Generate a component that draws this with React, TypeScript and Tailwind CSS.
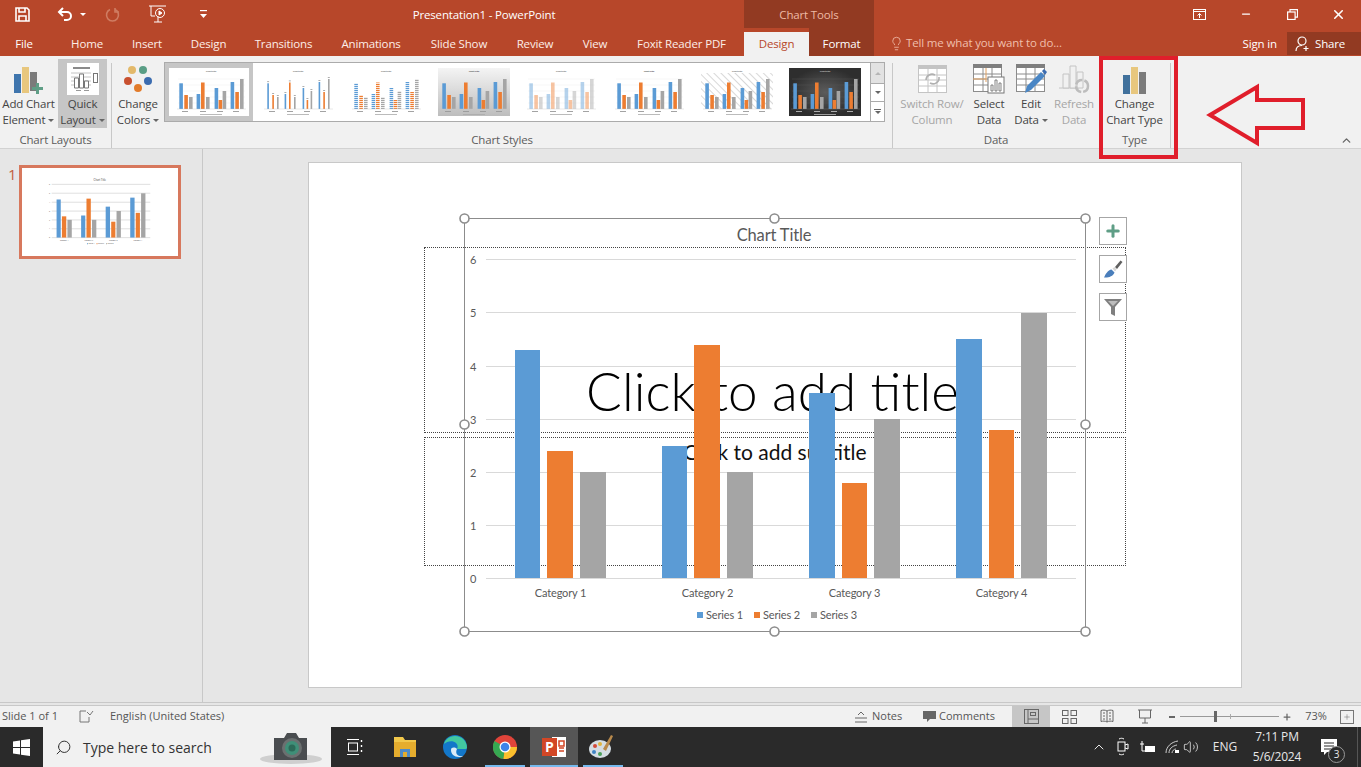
import { ChevronUp, Lightbulb, Minus, Plus, Search, Volume2, X } from "lucide-react";

const BLUE = "#5b9bd5";
const ORANGE = "#ed7d31";
const GRAY = "#a5a5a5";

const series = [
  { name: "Category 1", bars: [[515, 540, 350], [547, 573, 451], [580, 606, 472]] },
  { name: "Category 2", bars: [[662, 687, 446], [694, 720, 345], [727, 753, 472]] },
  { name: "Category 3", bars: [[809, 835, 393], [842, 867, 483], [874, 900, 419]] },
  { name: "Category 4", bars: [[956, 982, 339], [989, 1014, 430], [1021, 1047, 313]] },
];
const colors = [BLUE, ORANGE, GRAY];
const ticks = [[6, 259.5], [5, 312.5], [4, 366.5], [3, 419.5], [2, 472.5], [1, 525.5], [0, 578.5]];
const handles = [[464.5, 218.5], [774.5, 218.5], [1085.5, 218.5], [464.5, 424.5], [1085.5, 424.5], [464.5, 631.5], [774.5, 631.5], [1085.5, 631.5]];

function ChartArt({ mini = false }: { mini?: boolean }) {
  return (
    <g style={{ fontFamily: "Lato, sans-serif" }}>
      <text x="774" y="241" textAnchor="middle" fontSize="16.500" fill="#595959">Chart Title</text>
      {ticks.map(([n, y]) => (
        <g key={n}>
          <line x1="486" x2="1076" y1={y} y2={y} stroke="#d9d9d9" strokeWidth={mini ? 5 : 1} />
          <text x="473" y={y + 4} textAnchor="middle" fontSize="11" fill="#595959">{n}</text>
        </g>
      ))}
      {series.map(cat => (
        <g key={cat.name}>
          {cat.bars.map(([x1, x2, top], i) => (
            <rect key={i} x={x1} y={top} width={x2 - x1} height={578 - top} fill={colors[i]} />
          ))}
          <text x={(cat.bars[0][0] + cat.bars[2][1]) / 2} y="597" textAnchor="middle" fontSize="11" fill="#595959">{cat.name}</text>
        </g>
      ))}
      <rect x="697" y="612" width="6" height="6" fill={BLUE} />
      <text x="706" y="619" fontSize="11" fill="#595959">Series 1</text>
      <rect x="754" y="612" width="6" height="6" fill={ORANGE} />
      <text x="763" y="619" fontSize="11" fill="#595959">Series 2</text>
      <rect x="811" y="612" width="6" height="6" fill={GRAY} />
      <text x="820" y="619" fontSize="11" fill="#595959">Series 3</text>
    </g>
  );
}

// bar heights for the little previews in the styles gallery
const thumbBars = [
  [4.3, 3.6, 15.3], [9.3, 3.6, 27], [14, 3.6, 29],
  [21.6, 3.6, 26], [26, 3.6, 14.5], [31, 3.6, 29],
  [39.6, 3.6, 20], [43.6, 3.6, 32], [47.6, 3.6, 23],
  [55.6, 3.6, 14], [60.3, 3.6, 24], [65, 3.6, 11],
];

type ThumbKind = "plain" | "thin" | "striped" | "shaded" | "pale" | "bold" | "hatched" | "dark";

function StyleThumb({ kind }: { kind: ThumbKind }) {
  const dark = kind === "dark";
  const fill = (i: number) => {
    const c = colors[i % 3];
    if (kind === "striped") return `url(#stripe${i % 3})`;
    return c;
  };
  return (
    <svg width="72" height="48" viewBox="0 0 72 48" className="shrink-0">
      <defs>
        <linearGradient id="shade" x1="0" y1="0" x2="0" y2="1">
          <stop offset="0" stopColor="#f4f4f4" />
          <stop offset="1" stopColor="#bdbdbd" />
        </linearGradient>
        <radialGradient id="darkbg">
          <stop offset="0" stopColor="#5c5c5c" />
          <stop offset="1" stopColor="#2e2e2e" />
        </radialGradient>
        {colors.map((c, i) => (
          <pattern key={c} id={`stripe${i}`} width="2" height="2" patternUnits="userSpaceOnUse">
            <rect width="2" height="1.2" fill={c} />
          </pattern>
        ))}
        <pattern id="hatch" width="5" height="5" patternUnits="userSpaceOnUse" patternTransform="rotate(-45)">
          <rect width="1" height="5" fill="#d8d8d8" />
        </pattern>
      </defs>
      {kind === "shaded" && <rect width="72" height="48" fill="url(#shade)" />}
      {dark && <rect width="72" height="48" fill="url(#darkbg)" />}
      {kind === "hatched" && <rect x="0" y="5" width="72" height="36" fill="url(#hatch)" />}
      <text x="36" y="3.500" textAnchor="middle" fontSize="2.600" fontWeight={kind === "shaded" || kind === "bold" ? 700 : 400} fill={dark ? "#ddd" : "#555"} style={{ fontFamily: "Lato, sans-serif" }}>Chart Title</text>
      {(kind === "plain" || kind === "pale" || kind === "bold" || kind === "dark") && [11, 17, 23, 29, 35].map(y => (
        <line key={y} x1="3" x2="70" y1={y} y2={y} stroke={dark ? "#555" : "#e8e8e8"} strokeWidth="0.4" />
      ))}
      {thumbBars.map(([x, w, top], i) => (
        <rect key={i} x={kind === "thin" ? x + 1 : x} y={top} width={kind === "thin" ? 1.6 : w} height={41 - top} fill={fill(i)} opacity={kind === "pale" ? 0.45 : 1} />
      ))}
      {kind === "thin" && thumbBars.map(([x, , top], i) => (
        <rect key={i} x={x + 0.8} y={top - 2} width="2" height="0.8" fill="#999" />
      ))}
      <line x1="2" x2="71" y1="41" y2="41" stroke={dark ? "#777" : "#c8c8c8"} strokeWidth="0.4" />
      {[10, 28, 45, 61].map(x => (
        <rect key={x} x={x - 3} y="43" width="6" height="0.9" fill={dark ? "#bbb" : "#999"} />
      ))}
      <rect x="25" y="46" width="22" height="0.8" fill={dark ? "#bbb" : "#aaa"} />
    </svg>
  );
}

function RibbonButton({ w, icon, lines, caret, active, disabled }: {
  w: number; icon: React.ReactNode; lines: [string, string]; caret?: boolean; active?: boolean; disabled?: boolean;
}) {
  return (
    <div style={{ width: w }} className={`h-[69px] shrink-0 flex flex-col items-center ${active ? "bg-[#c6c6c6]" : ""} ${disabled ? "text-[#a6a6a6]" : "text-[#444444]"}`}>
      <div className="h-[38px] flex items-center justify-center">{icon}</div>
      <span className="h-4 leading-4 whitespace-nowrap">{lines[0]}</span>
      <span className="h-4 leading-4 whitespace-nowrap flex items-center">
        {lines[1]}
        {caret && <span className="ml-[3px] w-0 h-0 border-x-[3px] border-x-transparent border-t-[3px] border-t-[#666]" />}
      </span>
    </div>
  );
}

function Sep() {
  return <div className="w-px h-[85px] mt-[4px] bg-[#c8c8c8] shrink-0" />;
}

function GroupLabel({ children }: { children: string }) {
  return <div className="mt-1 h-4 leading-4 text-center text-[#5c5c5c] whitespace-nowrap">{children}</div>;
}

function BarsIcon() {
  return (
    <svg width="24" height="27" viewBox="0 0 24 27">
      <rect x="0" y="8" width="7" height="19" fill="#41719c" />
      <rect x="8" y="0" width="7" height="27" fill="#e8c77e" />
      <rect x="16" y="5" width="7" height="22" fill="#7b7b7b" />
    </svg>
  );
}

function TableIcon({ dim, head = "#7f7f7f" }: { dim?: boolean; head?: string }) {
  const line = dim ? "#c4c4c4" : "#8c8c8c";
  return (
    <>
      <rect x="0.5" y="3.500" width="28" height="24" fill="#fff" stroke={line} />
      <rect x="0" y="0" width="29" height="4" fill={dim ? "#c4c4c4" : head} />
      {[10, 19].map(x => <line key={x} x1={x} x2={x} y1="4" y2="27" stroke={line} />)}
      {[10, 15, 21].map(y => <line key={y} x1="0" x2="29" y1={y} y2={y} stroke={line} />)}
    </>
  );
}

const tabs = [
  ["Home", 62], ["Insert", 58], ["Design", 65], ["Transitions", 85], ["Animations", 90],
  ["Slide Show", 86], ["Review", 66], ["View", 54], ["Foxit Reader PDF", 119],
] as const;

const thumbKinds: ThumbKind[] = ["thin", "striped", "shaded", "pale", "bold", "hatched", "dark"];

export default function App() {
  return (
    <div className="w-[1361px] h-[767px] overflow-hidden relative flex flex-col bg-[#e6e6e6] text-[11.5px] tracking-[-0.15px]" style={{ fontFamily: "'Open Sans', sans-serif" }}>
      {/* Title bar and tabs */}
      <header className="h-14 bg-[#b7472a] text-white shrink-0">
        <div className="h-7 flex">
          <div className="w-[224px] flex items-center relative">
            <svg className="ml-[15px]" width="15" height="15" viewBox="0 0 15 15" fill="none" stroke="#fff" strokeWidth="1.6">
              <path d="M1 1h11l2 2v11H1z" />
              <path d="M4 1v4h6V1M4 14V9h7v5" />
            </svg>
            <svg className="ml-[27px]" width="16" height="14" viewBox="0 0 16 14" fill="none" stroke="#fff" strokeWidth="2">
              <path d="M6 1 2 5l4 4" />
              <path d="M2 5h8a4 4 0 0 1 0 8H7" />
            </svg>
            <span className="ml-[7px] w-0 h-0 border-x-[3px] border-x-transparent border-t-[3px] border-t-white" />
            <svg className="ml-[19px]" width="15" height="15" viewBox="0 0 15 15" fill="none" stroke="#cf7c62" strokeWidth="1.6">
              <path d="M5 2.500A6 6 0 1 0 10 2.500" />
              <path d="M10 1v4h4" />
            </svg>
            <svg className="ml-[29px]" width="18" height="20" viewBox="0 0 18 20" fill="none" stroke="#fff" strokeWidth="1">
              <path d="M0 2h17M2 2v10h4M9 12v6M5 18h8" />
              <circle cx="11" cy="9" r="4.500" />
              <path d="m10 7 3 2-3 2z" fill="#fff" />
            </svg>
            <svg className="ml-[33px]" width="7" height="8" viewBox="0 0 7 8" fill="#fff">
              <rect x="0" y="0" width="7" height="1.200" />
              <path d="M0 4h7L3.500 8z" />
            </svg>
          </div>
          <div className="w-[520px] pt-[2px] flex items-center justify-center">Presentation1 - PowerPoint</div>
          <div className="w-[130px] pt-[2px] bg-[#923a22] text-[#eeb9a4] flex items-center justify-center">Chart Tools</div>
          <div className="flex-1" />
          <div className="w-[46px] flex items-center justify-center">
            <svg width="13" height="11" viewBox="0 0 13 11" fill="none" stroke="#fff">
              <rect x="0.5" y="0.5" width="12" height="10" />
              <path d="M0 2.500h13M6.500 9V4.500M4.500 6.500l2-2 2 2" />
            </svg>
          </div>
          <div className="w-[47px] flex items-center justify-center"><Minus size={12} strokeWidth={2.5} /></div>
          <div className="w-[46px] flex items-center justify-center">
            <svg width="11" height="11" viewBox="0 0 11 11" fill="none" stroke="#fff" strokeWidth="1.2">
              <rect x="0.6" y="3" width="7.500" height="7.500" />
              <path d="M3 3V.6h7.500v7.500H8" />
            </svg>
          </div>
          <div className="w-[46px] flex items-center justify-center"><X size={15} strokeWidth={2.5} /></div>
        </div>
        <div className="h-7 flex">
          <div className="w-12 pt-2 leading-4 text-center">File</div>
          <div className="w-2" />
          {tabs.map(([label, w]) => (
            <div key={label} style={{ width: w }} className="pt-2 leading-4 text-center whitespace-nowrap text-[#fdeee8]">{label}</div>
          ))}
          <div className="w-[3px]" />
          <div className="w-[65px] mt-1 bg-[#f1f1f1] text-[#b7472a] leading-[23px] text-center">Design</div>
          <div className="w-[65px] bg-[#923a22] pt-2 leading-4 text-center">Format</div>
          <div className="ml-[15px] pt-[2px] flex items-center gap-[2px] text-[#f0bfac]">
            <Lightbulb size={15} strokeWidth={1.3} />
            <span className="leading-4 whitespace-nowrap">Tell me what you want to do...</span>
          </div>
          <div className="flex-1" />
          <div className="pt-2 leading-4 mr-[10px]">Sign in</div>
          <div className="w-[74px] h-[23px] mt-1 bg-[#923a22] flex items-center gap-[4px] pl-2">
            <svg width="16" height="16" viewBox="0 0 16 16" fill="none" stroke="#fff" strokeWidth="1.2">
              <circle cx="7" cy="5" r="4" />
              <path d="M1 15c0-3 2-5.500 6-5.500M11 10v5M8.500 12.500h5" />
            </svg>
            Share
          </div>
        </div>
      </header>

      {/* Ribbon */}
      <div className="h-[93px] shrink-0 bg-[#f1f1f1] border-b border-[#d2d2d2] flex pt-[3px]">
        <div className="w-[111px] shrink-0">
          <div className="flex gap-px">
            <RibbonButton w={57} lines={["Add Chart", "Element"]} caret icon={
              <svg width="30" height="30" viewBox="0 0 30 30" className="mt-[5px]">
                <rect x="0" y="9" width="7" height="19" fill="#3f75ad" />
                <rect x="8" y="2" width="7" height="26" fill="#e8c77e" />
                <rect x="16" y="7" width="7" height="19" fill="#7b7b7b" />
                <path d="M21 21h4v-4h3v4h4v3h-4v4h-3v-4h-4z" fill="#5f9e86" transform="translate(-3 1)" />
              </svg>
            } />
            <RibbonButton w={49} active lines={["Quick", "Layout"]} caret icon={
              <svg width="32" height="32" viewBox="0 0 32 32" className="mt-[3px]">
                <rect width="32" height="32" fill="#fff" />
                <rect x="6" y="4" width="17" height="2" fill="#8a8a8a" />
                <path d="M4 10h20M4 14h20M4 18h20M4 22h20" stroke="#c4c4c4" />
                <path d="M7.500 25v-10h4v10zM12.500 25V11h4v14zM17.500 25v-7h4v7z" fill="#fff" stroke="#777" />
                <rect x="26.500" y="10.500" width="4" height="9" fill="#fff" stroke="#777" />
                <rect x="9" y="27" width="5" height="1" fill="#999" />
                <rect x="17" y="27" width="5" height="1" fill="#999" />
              </svg>
            } />
          </div>
          <GroupLabel>Chart Layouts</GroupLabel>
        </div>
        <Sep />
        <div className="w-[780px] shrink-0">
          <div className="flex">
            <RibbonButton w={52} lines={["Change", "Colors"]} caret icon={
              <svg width="28" height="30" viewBox="0 0 28 30" className="mt-[4px]">
                <circle cx="8" cy="5" r="4" fill="#e3b96a" />
                <circle cx="19" cy="5" r="4" fill="#5a9e86" />
                <circle cx="4" cy="16" r="4" fill="#c8502f" />
                <circle cx="24" cy="16" r="4" fill="#3b6cb0" />
                <circle cx="14" cy="23" r="4" fill="#e27b2a" />
              </svg>
            } />
            <div className="mt-[3px] h-[60px] flex">
              <div className="w-[707px] bg-white border border-[#ababab] flex">
                <div className="w-[88px] h-[58px] bg-[#c6c6c6] shrink-0 flex items-center justify-center">
                  <div className="w-[80px] h-[48px] pl-[3px] bg-white flex justify-center"><StyleThumb kind="plain" /></div>
                </div>
                <div className="flex gap-[15.8px] items-center pl-[9px]">
                  {thumbKinds.map(k => <StyleThumb key={k} kind={k} />)}
                </div>
              </div>
              <div className="w-[14px] flex flex-col border-y border-r border-[#ababab]">
                <div className="h-[21px] bg-[#e2e2e2] border-b border-[#ababab] flex items-center justify-center">
                  <span className="w-0 h-0 border-x-[3px] border-x-transparent border-b-[3px] border-b-[#b5b5b5]" />
                </div>
                <div className="h-[18px] bg-white border-b border-[#ababab] flex items-center justify-center">
                  <span className="w-0 h-0 border-x-[3px] border-x-transparent border-t-[3px] border-t-[#666]" />
                </div>
                <div className="flex-1 bg-white flex flex-col items-center justify-center gap-px">
                  <span className="w-[7px] h-px bg-[#666]" />
                  <span className="w-0 h-0 border-x-[3px] border-x-transparent border-t-[3px] border-t-[#666]" />
                </div>
              </div>
            </div>
          </div>
          <GroupLabel>Chart Styles</GroupLabel>
        </div>
        <Sep />
        <div className="w-[206px] shrink-0">
          <div className="flex pl-[3px]">
            <RibbonButton w={72} disabled lines={["Switch Row/", "Column"]} icon={
              <svg width="29" height="28" viewBox="0 0 29 28" className="mt-[3px]">
                <TableIcon dim />
                <path d="M8 15a6 6 0 0 1 9-5M21 12a6 6 0 0 1-9 6" fill="none" stroke="#b0b0b0" strokeWidth="1.6" />
              </svg>
            } />
            <RibbonButton w={42} lines={["Select", "Data"]} icon={
              <svg width="32" height="30" viewBox="0 0 32 30" className="mt-[3px]">
                <TableIcon />
                <path d="M13 4v14M0 15h13" stroke="#e0a060" />
                <rect x="15" y="13" width="16" height="16" fill="#fff" stroke="#777" />
                <path d="M18 27v-6h2v6zM22 27V16h2v11zM26 27v-8h2v8z" fill="#fff" stroke="#666" strokeWidth="0.8" />
              </svg>
            } />
            <RibbonButton w={42} lines={["Edit", "Data"]} caret icon={
              <svg width="31" height="30" viewBox="0 0 31 30" className="mt-[3px]">
                <TableIcon />
                <path d="M9 29l2-7L25 8l4 4-14 14z" fill="#4a86c5" />
                <path d="m26 7 2-2 3 3-2 3z" fill="#3b6cb0" />
              </svg>
            } />
            <RibbonButton w={44} disabled lines={["Refresh", "Data"]} icon={
              <svg width="31" height="30" viewBox="0 0 31 30" className="mt-[3px]">
                <path d="M0 24h20" stroke="#c4c4c4" />
                <path d="M4 24V10h6v14zM11 24V2h6v22zM18 24V8h6v16z" fill="#f1f1f1" stroke="#c4c4c4" />
                <circle cx="23" cy="22" r="6" fill="none" stroke="#bdbdbd" strokeWidth="2.5" strokeDasharray="8 2" />
              </svg>
            } />
          </div>
          <GroupLabel>Data</GroupLabel>
        </div>
        <div className="w-[71px] shrink-0">
          <RibbonButton w={71} lines={["Change", "Chart Type"]} icon={<div className="mt-[5px]"><BarsIcon /></div>} />
          <GroupLabel>Type</GroupLabel>
        </div>
        <Sep />
        <div className="flex-1 flex justify-end items-end pr-2 pb-px">
          <ChevronUp size={13} strokeWidth={2.5} className="text-[#666]" />
        </div>
      </div>

      {/* Workspace */}
      <main className="h-[554px] shrink-0 flex border-b border-[#c8c8c8]">
        <aside className="w-[203px] shrink-0 border-r border-[#c8c8c8] pt-4 flex items-start">
          <span className="w-[19px] pl-2 text-[15px] leading-[16px] mt-[1px] text-[#c2603f]">1</span>
          <div className="w-[162px] h-[94px] border-[3px] border-[#d7785d] bg-white">
            <svg viewBox="308 162 934 526" className="w-full h-full">
              <ChartArt mini />
            </svg>
          </div>
        </aside>
        <div className="flex-1 pl-[105px] pt-[13px]">
          <div className="w-[934px] h-[526px] bg-white border border-[#c8c8c8] relative">
            {/* placeholders sit under the chart */}
            <div className="absolute left-[115px] top-[84px] w-[702px] h-[186px] border border-dotted border-[#444] flex items-end justify-center pb-[2px] pr-[5px] text-[53px] font-light text-black tracking-normal" style={{ fontFamily: "Lato, sans-serif" }}>
              Click to add title
            </div>
            <div className="absolute left-[115px] top-[274px] w-[702px] h-[129px] border border-dotted border-[#444] flex justify-center text-[21px] leading-[27px] text-[#111] tracking-normal" style={{ fontFamily: "Lato, sans-serif" }}>
              Click to add subtitle
            </div>
            <svg viewBox="309 163 932 524" className="absolute inset-0 w-full h-full">
              <ChartArt />
              <rect x="464.500" y="218.500" width="621" height="413" fill="none" stroke="#8c8c8c" />
              {handles.map(([x, y]) => (
                <circle key={`${x}-${y}`} cx={x} cy={y} r="4.500" fill="#fff" stroke="#8c8c8c" strokeWidth="1.6" />
              ))}
            </svg>
            <div className="absolute left-[790px] top-[54px] flex flex-col gap-[10px]">
              <div className="w-7 h-7 bg-white border border-[#a6a6a6] flex items-center justify-center">
                <Plus size={18} strokeWidth={4} className="text-[#5f9e86]" />
              </div>
              <div className="w-7 h-7 bg-white border border-[#a6a6a6] flex items-center justify-center">
                <svg width="20" height="20" viewBox="0 0 20 20">
                  <path d="m12 8 5.500-6.500L19.500 3 14 10z" fill="#5f5f5f" />
                  <path d="m9.500 9.500 2-1.500 2 2.500-1.500 2z" fill="#d5d5d5" />
                  <path d="M1 18.500c4 .5 9-1 10.500-5L8.500 10.500C5 11 2.500 15 1 18.500z" fill="#4a7ebb" />
                </svg>
              </div>
              <div className="w-7 h-7 bg-white border border-[#a6a6a6] flex items-center justify-center">
                <svg width="20" height="20" viewBox="0 0 20 20">
                  <path d="M1 2h18l-7 8v9l-4-2v-7z" fill="#7f7f7f" />
                  <path d="M5 4h10l-5 5z" fill="#bdbdbd" />
                </svg>
              </div>
            </div>
          </div>
        </div>
      </main>

      {/* Status bar */}
      <footer className="mt-[2px] h-[22px] shrink-0 bg-[#f1f1f1] border-t border-[#c8c8c8] flex items-center text-[11px] tracking-normal text-[#555]">
        <span className="ml-[2px] w-[77px] whitespace-nowrap">Slide 1 of 1</span>
        <svg width="15" height="14" viewBox="0 0 15 14" fill="none" stroke="#777"><path d="M7 1H1v11h6M8 2l3 3 3-4M10 7v5H7" /></svg>
        <span className="ml-[16px] whitespace-nowrap">English (United States)</span>
        <div className="flex-1" />
        <svg width="12" height="12" viewBox="0 0 12 12" stroke="#666"><path d="M0 7h12M0 11h12M3 4l3-3 3 3" fill="none" /></svg>
        <span className="ml-[5px] w-[51px]">Notes</span>
        <svg width="13" height="13" viewBox="0 0 13 13" fill="#666"><path d="M0 1h13v8H7l-3 3V9H0z" /></svg>
        <span className="ml-[3px] w-[73px] whitespace-nowrap">Comments</span>
        <div className="w-[38px] h-[21px] bg-[#c6c6c6] flex items-center justify-center">
          <svg width="15" height="15" viewBox="0 0 15 15" fill="none" stroke="#666"><rect x="0.5" y="0.5" width="14" height="14" /><path d="M4 .5v14M4 10h10" /><rect x="6.500" y="3.500" width="5" height="3" /></svg>
        </div>
        <div className="w-[38px] flex justify-center">
          <svg width="15" height="14" viewBox="0 0 15 14" fill="none" stroke="#666"><rect x="0.5" y="0.5" width="5.500" height="5" /><rect x="9" y="0.5" width="5.500" height="5" /><rect x="0.5" y="8.500" width="5.500" height="5" /><rect x="9" y="8.500" width="5.500" height="5" /></svg>
        </div>
        <div className="w-[38px] flex justify-center">
          <svg width="14" height="15" viewBox="0 0 14 15" fill="none" stroke="#666"><path d="M7 2C5 .8 3 1 1 1.500v11c2-.5 4-.7 6 .5 2-1.200 4-1 6-.5v-11C11 1 9 .8 7 2zM7 2v11M3 4h2M3 7h2M3 10h2M9 4h2M9 7h2M9 10h2" /></svg>
        </div>
        <div className="w-[38px] flex justify-center">
          <svg width="14" height="15" viewBox="0 0 14 15" fill="none" stroke="#666"><path d="M0 1h14M1.500 1v8h11V1M7 9v5M4 14h6" /></svg>
        </div>
        <div className="w-[115px] flex items-center pl-[5px]">
          <span className="w-[6px] h-[2px] bg-[#666] shrink-0" />
          <div className="w-[99px] h-px bg-[#999] relative ml-[5px]">
            <span className="absolute left-[34px] -top-[5px] w-[3px] h-[11px] bg-[#666]" />
            <span className="absolute left-[50px] -top-[2px] w-px h-[5px] bg-[#aaa]" />
          </div>
        </div>
        <Plus size={10} strokeWidth={3} className="text-[#666] ml-[3px]" />
        <span className="ml-[12px] w-[24px] text-center">73%</span>
        <div className="ml-[12px] mr-[7px] w-[14px] h-[14px] border border-[#777] flex items-center justify-center">
          <Plus size={8} strokeWidth={1.5} className="text-[#666]" />
        </div>
      </footer>

      {/* Windows taskbar */}
      <div className="h-10 shrink-0 bg-[#2a2a2a] flex items-stretch text-white tracking-normal">
        <div className="w-[43px] flex items-center justify-center">
          <svg width="17" height="17" viewBox="0 0 17 17" fill="#fff"><path d="M0 2.500 7 1.500v6.500H0zM8 1.300 17 0v8H8zM0 9h7v6.500L0 14.500zM8 9h9v8l-9-1.300z" /></svg>
        </div>
        <div className="w-[288px] bg-[#f1f1f1] flex items-center text-[#333] text-[14px]">
          <Search size={17} strokeWidth={1.4} className="ml-[12px] -scale-x-100" />
          <span className="ml-[11px] w-[128px] whitespace-nowrap">Type here to search</span>
          <svg className="ml-[49px] shrink-0" width="62" height="36" viewBox="0 0 62 36">
            <ellipse cx="31" cy="30" rx="31" ry="5" fill="#cfcfcf" />
            <path d="M14 9h10l3-5h9l3 5h8v22H14z" fill="#4a4d50" />
            <circle cx="32" cy="19" r="10" fill="#6b7070" />
            <circle cx="32" cy="19" r="7" fill="#3f8f78" />
            <circle cx="32" cy="19" r="3.500" fill="#2c6a58" />
          </svg>
        </div>
        <div className="w-12 flex items-center justify-center">
          <svg width="16" height="16" viewBox="0 0 16 16" fill="none" stroke="#fff"><path d="M0 .5h12M0 15.500h12" /><rect x="1.500" y="4" width="9" height="8" /><path d="M14.500 1v2M14.500 6v2M14.500 11v2" strokeWidth="1.400" /></svg>
        </div>
        <div className="w-[51px] flex items-center justify-center">
          <svg width="22" height="20" viewBox="0 0 22 20"><path d="M0 0h9l2 3h11v17H0z" fill="#f2c84b" /><path d="M0 5h22v15H0z" fill="#e5ad2e" /><rect x="6" y="12" width="10" height="8" fill="#4f8bc9" /><rect x="9" y="15" width="4" height="5" fill="#e5ad2e" /></svg>
        </div>
        <div className="w-[49px] flex items-center justify-center">
          <svg width="24" height="24" viewBox="0 0 24 24">
            <circle cx="12" cy="12" r="12" fill="#1377c9" />
            <path d="M24 13c0-7-5-12-12-12C6 1 2 5 1 9c3-3 9-4 12-1 2 2 2 4 1 6h6c2 0 4 0 4-1z" fill="#42c8a0" />
            <path d="M8 15c0 4 3 7 8 7 2 0 3 0 4-1-6 1-8-3-6-7-2-2-6-2-6 1z" fill="#fff" opacity="0.85" />
          </svg>
        </div>
        <div className="w-[51px] flex items-center justify-center">
          <svg width="24" height="24" viewBox="0 0 24 24">
            <circle cx="12" cy="12" r="12" fill="#e0443a" />
            <path d="M12 12 1.500 6a12 12 0 0 0 9 18z" fill="#36a852" />
            <path d="M12 12h12a12 12 0 0 1-13.500 12z" fill="#fbc02d" />
            <circle cx="12" cy="12" r="5.500" fill="#fff" />
            <circle cx="12" cy="12" r="4.300" fill="#3f83e8" />
          </svg>
        </div>
        <div className="w-12 bg-[#565656] flex items-center justify-center">
          <svg width="24" height="22" viewBox="0 0 24 22">
            <rect x="10" y="1" width="14" height="20" fill="#fff" />
            <rect x="0" y="2" width="15" height="18" fill="#d24726" />
            <text x="7.500" y="16" textAnchor="middle" fontSize="14" fontWeight="700" fill="#fff" style={{ fontFamily: "Open Sans, sans-serif" }}>P</text>
            <path d="M17 5h5v5h-5zM17 12h5M17 15h5" stroke="#d24726" fill="none" strokeWidth="1.500" />
          </svg>
        </div>
        <div className="w-[46px] flex items-center justify-center">
          <svg width="26" height="26" viewBox="0 0 26 26">
            <ellipse cx="12" cy="15" rx="11" ry="9" fill="#d5dde3" />
            <circle cx="7" cy="12" r="2" fill="#d24b3a" />
            <circle cx="12" cy="10" r="2" fill="#e0b43f" />
            <circle cx="6" cy="18" r="2" fill="#3f83c4" />
            <circle cx="12" cy="20" r="2" fill="#4a9e5a" />
            <path d="m15 15 8-14 2 1-7 15z" fill="#b98a4c" />
          </svg>
        </div>
        <div className="flex-1 relative" />
        <div className="flex items-center text-[#e8e8e8]">
          <ChevronUp size={16} strokeWidth={1.5} />
          <svg className="ml-[10px]" width="12" height="20" viewBox="0 0 12 20" fill="none" stroke="#fff"><rect x="1" y="5" width="7" height="9" /><path d="m8 8 3-1v5l-3-1M2 2c2-1 3-1 5 0M2 17c2 1 3 1 5 0" /></svg>
          <svg className="ml-[11px]" width="16" height="12" viewBox="0 0 16 12" fill="#fff"><path d="M5 5h10v6H5z" /><path d="M0 3h4M2 0v6M2 6v4h3" stroke="#fff" fill="none" /></svg>
          <svg className="ml-[9px]" width="15" height="14" viewBox="0 0 15 14" fill="none" stroke="#cfcfcf"><path d="M1 13C1 7 6 2 13 1M4 13c0-4 3-7 8-8M7 13c0-2 2-4 4-4" /><rect x="10" y="10" width="4" height="3" fill="#fff" stroke="none" /></svg>
          <Volume2 size={16} strokeWidth={1.2} className="ml-[3px]" />
          <span className="ml-2 w-9 text-[12px] text-center">ENG</span>
          <div className="ml-[4px] w-[60px] text-[12px] tracking-[-0.2px] leading-5 text-center">
            <div>7:11 PM</div>
            <div>5/6/2024</div>
          </div>
          <div className="ml-[14px] w-9 relative h-full flex items-center">
            <svg width="16" height="16" viewBox="0 0 16 16" fill="#fff"><path d="M0 0h16v13H6l-3 3v-3H0z" /><path d="M3 4h10M3 7h10M3 10h7" stroke="#2a2a2a" /></svg>
            <span className="absolute left-[7px] top-[19px] w-[17px] h-[17px] rounded-full bg-[#2a2a2a] border border-[#999] text-[10px] leading-[15px] text-center">3</span>
          </div>
          <div className="w-px h-full bg-[#555] mr-[3px]" />
        </div>
        <div className="absolute left-[485px] bottom-0 w-10 h-[2px] bg-[#76b9ed]" />
        <div className="absolute left-[530px] bottom-0 w-12 h-[2px] bg-[#76b9ed]" />
        <div className="absolute left-[583px] bottom-0 w-10 h-[2px] bg-[#76b9ed]" />
      </div>

      {/* Red annotation on the screenshot */}
      <div className="absolute left-[1099px] top-[56px] w-[79px] h-[103px] border-[4px] border-[#e01e2b]" />
      <svg className="absolute left-[1200px] top-[80px]" width="110" height="70" viewBox="1200 80 110 70" fill="none" stroke="#e01e2b" strokeWidth="4">
        <path d="M1210 115 1257 87v13h46v28h-46v15z" />
      </svg>
    </div>
  );
}
